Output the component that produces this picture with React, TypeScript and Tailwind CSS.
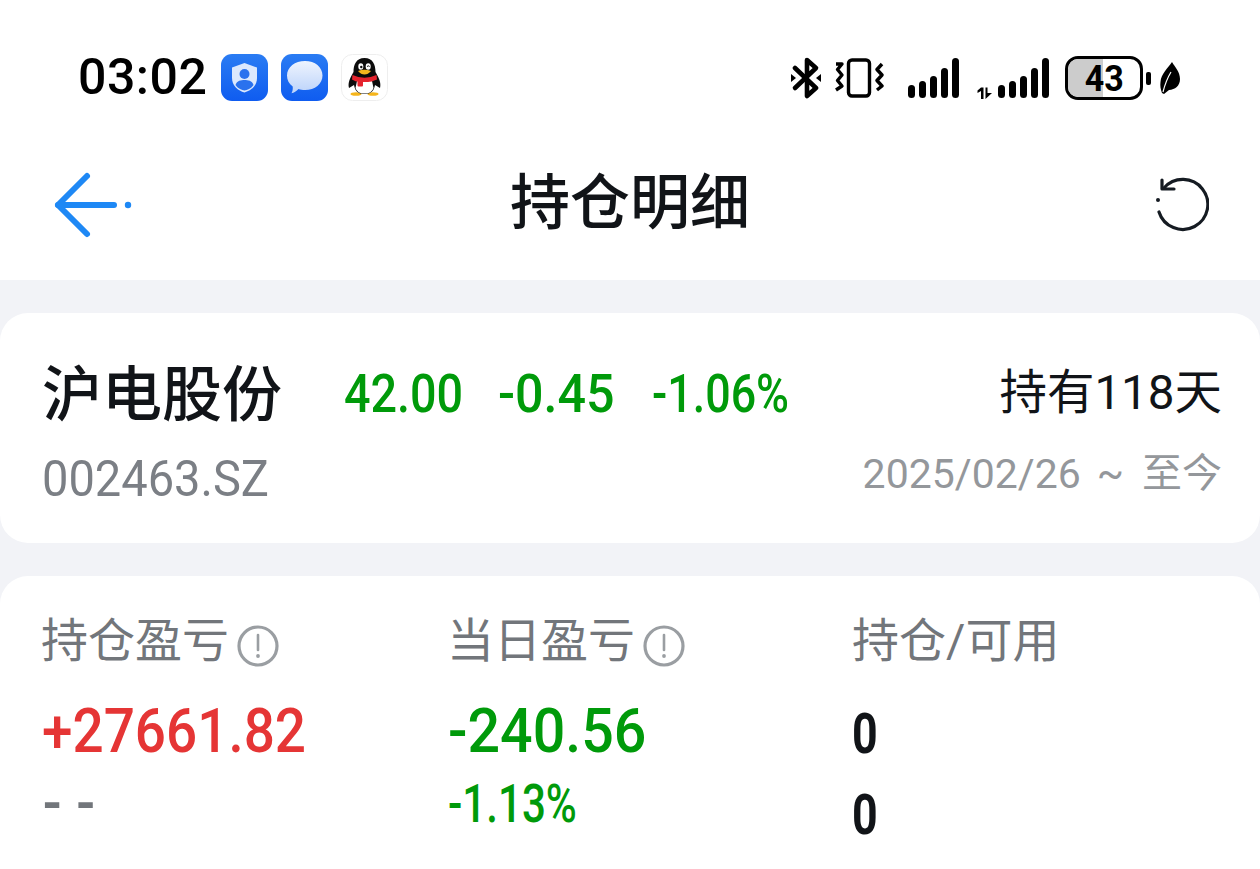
import React from 'react';

const CJK = "font-['Roboto','Noto_Sans_CJK_SC',sans-serif]";

function BackArrow() {
  return (
    <svg width="84" height="70" viewBox="0 0 84 70" fill="none" stroke="#1e88f5" strokeLinecap="round" strokeLinejoin="round">
      <path d="M35 6 L6 35 L35 64" strokeWidth="6" />
      <path d="M6 35 H62" strokeWidth="6" />
      <circle cx="76" cy="35" r="3.2" fill="#1e88f5" stroke="none" />
    </svg>
  );
}

function RefreshIcon() {
  return (
    <svg width="56" height="56" viewBox="0 0 56 56" fill="none" stroke="#151b22" strokeWidth="3.2" strokeLinecap="round" strokeLinejoin="round">
      <path d="M11 11 A25 25 0 1 1 6 35" />
      <path d="M9 3 L9 12 L21 12" />
      <circle cx="5" cy="23" r="2" fill="#151b22" stroke="none" />
    </svg>
  );
}

function InfoIcon() {
  return (
    <svg width="42" height="42" viewBox="0 0 42 42" fill="none" className="shrink-0 mt-[11px]">
      <circle cx="21" cy="21" r="19" stroke="#9a9ea2" strokeWidth="3.2" />
      <path d="M21 10 V25" stroke="#9a9ea2" strokeWidth="2.6" strokeLinecap="round" />
      <circle cx="21" cy="31" r="1.9" fill="#9a9ea2" />
    </svg>
  );
}

function ShieldApp() {
  return (
    <svg width="47" height="47" viewBox="0 0 47 47">
      <defs>
        <linearGradient id="shieldBg" x1="0" y1="0" x2="0" y2="1">
          <stop offset="0" stopColor="#2a7cf3" />
          <stop offset="1" stopColor="#0f5cf0" />
        </linearGradient>
      </defs>
      <rect width="47" height="47" rx="11" fill="url(#shieldBg)" />
      <path d="M23.5 9 L36 13.5 V24 C36 32 30 36.5 23.5 38.5 C17 36.5 11 32 11 24 V13.5 Z" fill="#dbe8fd" />
      <circle cx="23.5" cy="20" r="5" fill="#2a72ee" />
      <path d="M14.5 31 C16 26.5 20 26 23.5 26 C27 26 31 26.5 32.5 31 C30 35 26 36 23.5 36.5 C21 36 17 35 14.5 31 Z" fill="#2a72ee" />
    </svg>
  );
}

function MessageApp() {
  return (
    <svg width="47" height="47" viewBox="0 0 47 47">
      <defs>
        <linearGradient id="msgBg" x1="0" y1="0" x2="0" y2="1">
          <stop offset="0" stopColor="#2a7cf3" />
          <stop offset="1" stopColor="#0f5cf0" />
        </linearGradient>
        <linearGradient id="msgBubble" x1="0" y1="0" x2="0" y2="1">
          <stop offset="0" stopColor="#eef4fe" />
          <stop offset="1" stopColor="#bcd3fa" />
        </linearGradient>
      </defs>
      <rect width="47" height="47" rx="11" fill="url(#msgBg)" />
      <path d="M24 7 C34 7 41.5 13 41.5 21.5 C41.5 30 34 36 24 36 C21.5 36 19.5 35.7 17.5 35 C15.5 37 13 38.8 10.5 39.3 C11.5 37.5 12 35 11.7 32.5 C8 30 6 26 6 21.5 C6 13 14 7 24 7 Z" fill="url(#msgBubble)" />
    </svg>
  );
}

function QQApp() {
  return (
    <svg width="47" height="47" viewBox="0 0 47 47">
      <rect x="0.5" y="0.5" width="46" height="46" rx="11" fill="#fff" stroke="#eeeeee" />
      <ellipse cx="15" cy="40" rx="5.5" ry="1.8" fill="#f5b51c" />
      <ellipse cx="32" cy="40" rx="5.5" ry="1.8" fill="#f5b51c" />
      <path d="M23.5 4 C15 4 12.5 11 12.5 18 C9.5 23 6.5 29 8 34 L13 31 C14 37 17 40 23.5 40 C30 40 33 37 34 31 L39 34 C40.5 29 37.5 23 34.5 18 C34.5 11 32 4 23.5 4 Z" fill="#0c0c0c" />
      <path d="M14.5 34 L16 27 H31 L32.5 34 Q31 39.5 23.5 39.5 Q16 39.5 14.5 34 Z" fill="#fff" />
      <ellipse cx="19.8" cy="12.5" rx="2.5" ry="3.2" fill="#fff" />
      <ellipse cx="27.2" cy="12.5" rx="2.5" ry="3.2" fill="#fff" />
      <circle cx="20.3" cy="13" r="1.2" fill="#0c0c0c" />
      <path d="M26 12.5 Q27.3 11.2 28.6 12.5" stroke="#0c0c0c" strokeWidth="1" fill="none" />
      <path d="M17 17 Q23.5 14.5 30 17 Q27 20.5 23.5 20.5 Q20 20.5 17 17 Z" fill="#f5b51c" />
      <path d="M11.5 21 Q23.5 26.5 35.5 21 L36 25.5 Q30 28 27 28 L19 28 Q14 27.5 11 25.5 Z" fill="#e5232d" />
      <rect x="16.5" y="26" width="5.5" height="6.5" rx="1" fill="#e5232d" />
    </svg>
  );
}

function SignalBars() {
  return (
    <div className="flex items-end gap-[4px] h-[40px]">
      <div className="w-[7px] h-[13px] rounded-full bg-black" />
      <div className="w-[7px] h-[17px] rounded-full bg-black" />
      <div className="w-[7px] h-[22px] rounded-full bg-black" />
      <div className="w-[7px] h-[30px] rounded-full bg-black" />
      <div className="w-[7px] h-[40px] rounded-full bg-black" />
    </div>
  );
}

function StatusGlyphs() {
  return (
    <div className="flex items-center">
      {/* bluetooth */}
      <svg width="32" height="42" viewBox="0 0 32 42" fill="none" stroke="#000" strokeWidth="4.6" strokeLinejoin="round" strokeLinecap="round">
        <path d="M5 11 L26 31 L17 39 V24" />
        <path d="M17 18 V3 L26 11 L5 31" />
        <path d="M1 17 L6 21 L1 25 Z" fill="#000" stroke="none" />
        <path d="M31 17 L26 21 L31 25 Z" fill="#000" stroke="none" />
      </svg>
      {/* vibrate */}
      <svg width="49" height="42" viewBox="0 0 49 42" fill="none" stroke="#000" className="ml-[13px]">
        <rect x="13.5" y="3" width="21" height="36" rx="3.5" strokeWidth="3.4" />
        <path d="M1 7 H7 L2.5 12.5 L7 18 L2.5 23.5 L7 29 L1 33" strokeWidth="3.4" strokeLinejoin="round" />
        <path d="M47 7 L42 12.5 L47 18 L42 23.5 L47 29 L42 33" strokeWidth="3.4" strokeLinejoin="round" />
      </svg>
      {/* signal 1 */}
      <div className="ml-[24px]"><SignalBars /></div>
      {/* signal 2 */}
      <svg width="15" height="12" viewBox="0 0 15 12" className="ml-[18px] self-end mb-[1px]">
        <path d="M0.5 3.5 L4 0.5 H6.5 V12 H4 V4 L0.5 6 Z" fill="#000" />
        <path d="M8.5 0.5 H10.5 V6 H15 L8.5 12 Z" fill="#000" />
      </svg>
      <div className="ml-[6px]"><SignalBars /></div>
      {/* battery */}
      <div className="relative ml-[16px] w-[78px] h-[44px] rounded-[13px] border-[3px] border-black overflow-hidden bg-white">
        <div className="absolute inset-y-0 left-0 w-[35px] bg-[#cccccc]" />
        <div className="absolute inset-0 flex items-center justify-center font-['Roboto',sans-serif] font-bold text-[37px] leading-none text-black">
          <span className="inline-block scale-x-[0.92]">43</span>
        </div>
      </div>
      <div className="ml-[3px] w-[5px] h-[13px] rounded-[2px] bg-black" />
      {/* leaf */}
      <svg width="20" height="32" viewBox="0 0 20 32" className="ml-[9px]">
        <path d="M12 0 C15 5 20 10 20 17 C20 24 15 27.5 9 28 L4 32 L2 31 C0.5 27 0 24 0.5 20 C1 12 8 6 12 0 Z" fill="#000" />
        <path d="M3 30 C5 22 8 15 11 10" stroke="#fff" strokeWidth="1.2" fill="none" />
      </svg>
    </div>
  );
}

export default function App() {
  return (
    <div className={`w-[1260px] h-[869px] overflow-hidden bg-[#f2f3f7] ${CJK}`}>
      {/* Status bar */}
      <div className="bg-white h-[140px] pl-[78px] pr-[80px] pt-[52px] flex items-start justify-between">
        <div className="flex items-center h-[50px]">
          <span className="text-[50px] leading-none font-medium text-black tracking-[0.5px]">03:02</span>
          <div className="ml-[14px] flex items-center gap-[13px]">
            <ShieldApp />
            <MessageApp />
            <QQApp />
          </div>
        </div>
        <div className="pt-[4px]">
          <StatusGlyphs />
        </div>
      </div>

      {/* Nav bar */}
      <div className="bg-white h-[140px] relative flex items-center justify-between pl-[52px] pr-[51px] pb-[10px]">
        <BackArrow />
        <div className="absolute inset-x-0 top-[24px] text-center text-[60px] leading-[80px] font-medium text-[#111418]">持仓明细</div>
        <RefreshIcon />
      </div>

      {/* Stock card */}
      <div className="mt-[33px] bg-white rounded-[28px] h-[230px] pl-[42px] pr-[38px] pt-[46px]">
        <div className="flex items-center justify-between h-[70px]">
          <div className="flex items-center">
            <span className="text-[60px] leading-[70px] font-medium text-[#111418] w-[302px] mt-[4px]">沪电股份</span>
            <div className="flex text-[54px] leading-none font-medium text-[#009a0a]">
              <span className="w-[154px]"><span className="inline-block origin-left scale-x-[0.865]">42.00</span></span>
              <span className="w-[154px]"><span className="inline-block origin-left scale-x-[0.93]">-0.45</span></span>
              <span><span className="inline-block origin-left scale-x-[0.83]">-1.06%</span></span>
            </div>
          </div>
          <span className="text-[47.5px] leading-none text-[#111418]">持有118天</span>
        </div>
        <div className="flex items-start justify-between mt-[20px]">
          <span className="text-[50px] leading-[60px] text-[#7b7f85] inline-block origin-left scale-x-[0.94]">002463.SZ</span>
          <div className="flex items-center text-[#94979b] leading-[50px]">
            <span className="text-[41px]">2025/02/26</span>
            <span className="text-[40px] ml-[16px]">~</span>
            <span className="text-[40px] ml-[18px]">至今</span>
          </div>
        </div>
      </div>

      {/* P&L card */}
      <div className="mt-[33px] bg-white rounded-t-[28px] h-[300px] pl-[42px] pt-[34px] grid grid-cols-[406px_404px_1fr]">
        <div>
          <div className="flex items-center gap-[8px] h-[60px]">
            <span className="text-[47px] leading-none text-[#72767b] -ml-[1px]">持仓盈亏</span>
            <InfoIcon />
          </div>
          <div className="mt-[26px] text-[62px] leading-[70px] font-medium text-[#e53535]">
            <span className="inline-block origin-left scale-x-[0.885]">+27661.82</span>
          </div>
          <div className="mt-[13px] text-[52px] leading-[50px] font-bold text-[#72767b]">- -</div>
        </div>
        <div>
          <div className="flex items-center gap-[8px] h-[60px]">
            <span className="text-[47px] leading-none text-[#72767b] -ml-[1px]">当日盈亏</span>
            <InfoIcon />
          </div>
          <div className="mt-[26px] text-[62px] leading-[70px] font-medium text-[#009a0a]">
            <span className="inline-block origin-left scale-x-[0.925]">-240.56</span>
          </div>
          <div className="mt-[13px] text-[54px] leading-[50px] font-medium text-[#009a0a]">
            <span className="inline-block origin-left scale-x-[0.78]">-1.13%</span>
          </div>
        </div>
        <div>
          <div className="flex items-center h-[60px]">
            <span className="text-[47px] leading-none text-[#72767b]">持仓/可用</span>
          </div>
          <div className="mt-[29px] text-[56px] leading-[70px] font-bold text-[#111418]">
            <span className="inline-block origin-left scale-x-[0.8]">0</span>
          </div>
          <div className="mt-[21px] text-[56px] leading-[50px] font-bold text-[#111418]">
            <span className="inline-block origin-left scale-x-[0.8]">0</span>
          </div>
        </div>
      </div>
    </div>
  );
}
